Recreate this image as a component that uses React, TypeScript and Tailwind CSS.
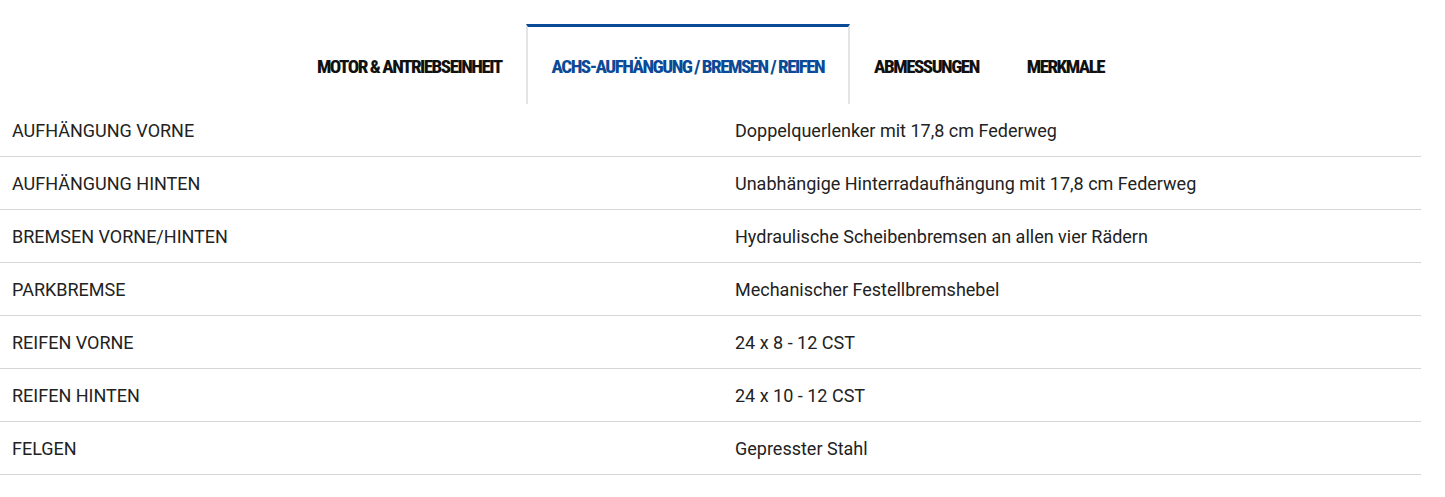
import React from 'react';
import clsx from 'clsx';

const tabs = [
  { id: 'motor', label: 'MOTOR & ANTRIEBSEINHEIT' },
  { id: 'achs', label: 'ACHS-AUFHÄNGUNG / BREMSEN / REIFEN' },
  { id: 'abm', label: 'ABMESSUNGEN' },
  { id: 'merk', label: 'MERKMALE' },
];

const specs = [
  ['AUFHÄNGUNG VORNE', 'Doppelquerlenker mit 17,8 cm Federweg'],
  ['AUFHÄNGUNG HINTEN', 'Unabhängige Hinterradaufhängung mit 17,8 cm Federweg'],
  ['BREMSEN VORNE/HINTEN', 'Hydraulische Scheibenbremsen an allen vier Rädern'],
  ['PARKBREMSE', 'Mechanischer Festellbremshebel'],
  ['REIFEN VORNE', '24 x 8 - 12 CST'],
  ['REIFEN HINTEN', '24 x 10 - 12 CST'],
  ['FELGEN', 'Gepresster Stahl'],
];

export default function App() {
  const active = 'achs';
  return (
    <div className="w-[1445px] h-[497px] bg-white font-['Roboto',sans-serif] text-[#222]">
      <div className="w-[1421px] pt-6">
        {/* Tabs */}
        <ul className="flex justify-center h-20">
          {tabs.map((t) => {
            const isActive = t.id === active;
            return (
              <li
                key={t.id}
                className={clsx(
                  "flex items-center px-6 font-['Roboto',sans-serif] [font-stretch:75%] font-extrabold text-[19px] tracking-[-1.5px]",
                  isActive
                    ? 'border-t-[3px] border-x-2 border-t-[#0b4a97] border-x-[#e4e4e4] text-[#0b4a97] pt-1'
                    : 'pt-[7px] text-[#111]'
                )}
              >
                {t.label}
              </li>
            );
          })}
        </ul>

        {/* Spec rows */}
        <div>
          {specs.map(([k, v]) => (
            <div key={k} className="grid grid-cols-[723px_1fr] h-[53px] items-center border-b border-[#d6d6d6] text-[18px]">
              <div className="px-3">{k}</div>
              <div className="px-3">{v}</div>
            </div>
          ))}
        </div>
      </div>
    </div>
  );
}
